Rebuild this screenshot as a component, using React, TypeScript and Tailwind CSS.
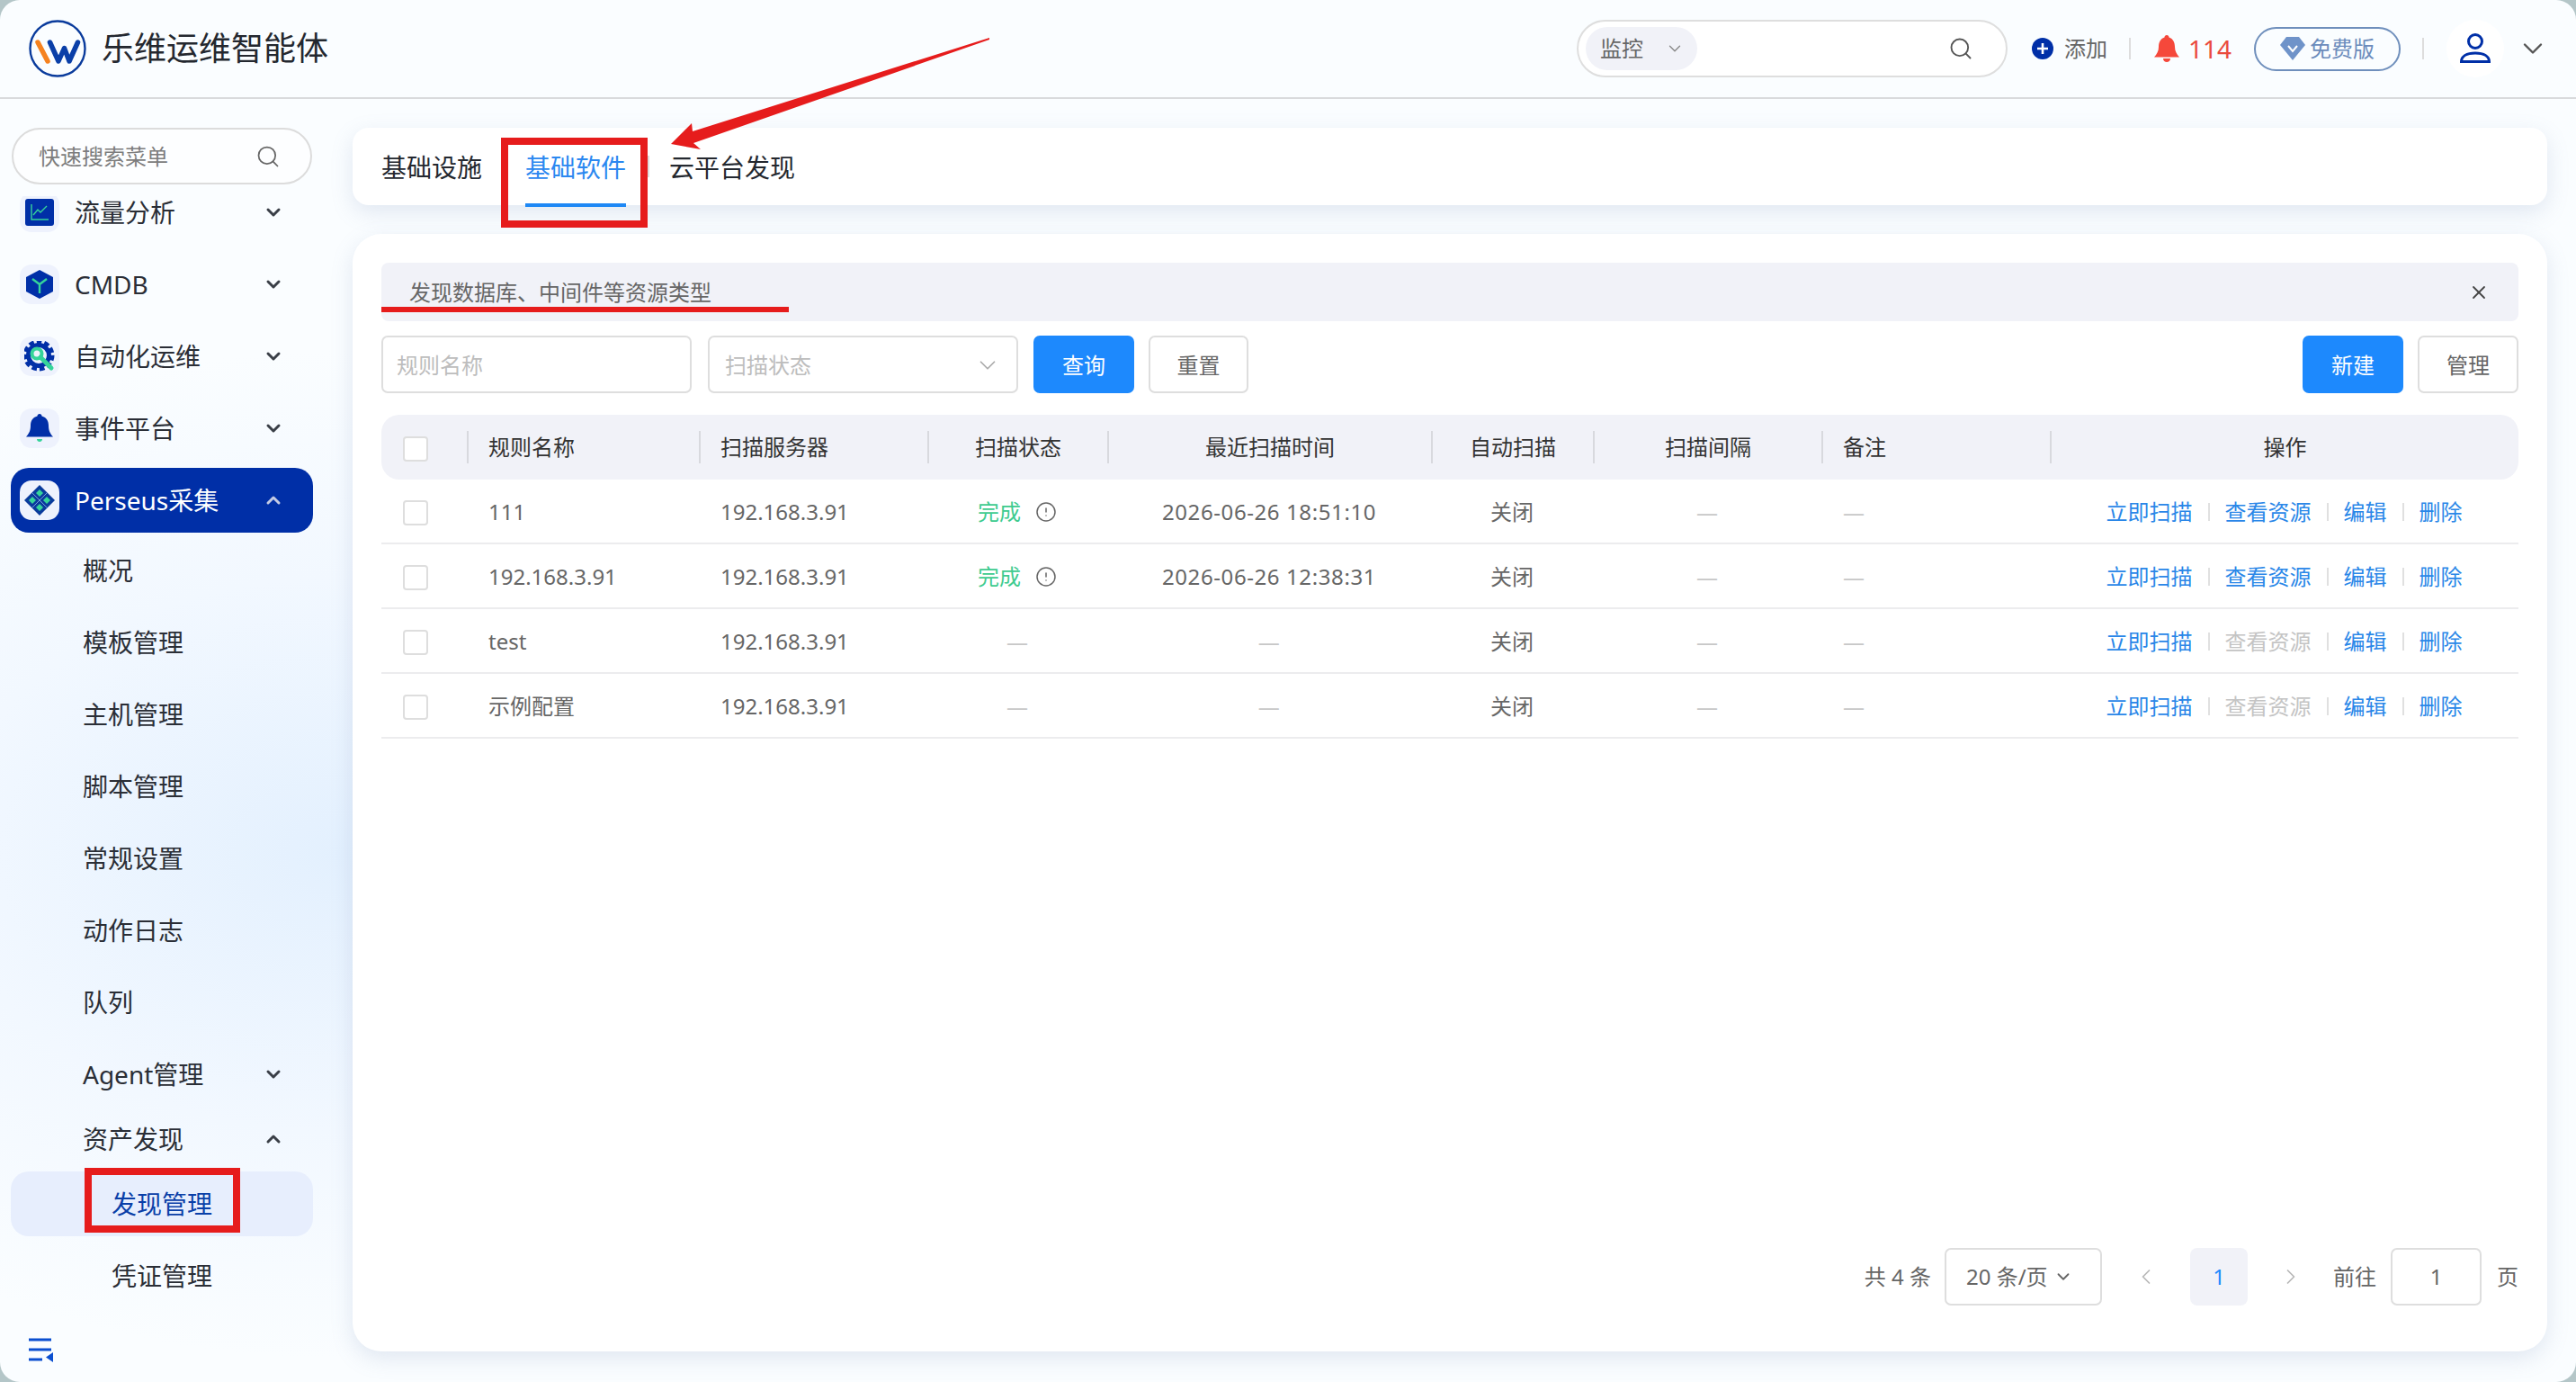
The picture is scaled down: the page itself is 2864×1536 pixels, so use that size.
import { ChevronDown, ChevronLeft, ChevronRight, ChevronUp, Info, Search, X } from 'lucide-react'

const subMenus = ['概况', '模板管理', '主机管理', '脚本管理', '常规设置', '动作日志', '队列']

const rows = [
  { name: '111', status: 'done', time: '2026-06-26 18:51:10', canView: true },
  { name: '192.168.3.91', status: 'done', time: '2026-06-26 12:38:31', canView: true },
  { name: 'test', status: '', time: '', canView: false },
  { name: '示例配置', status: '', time: '', canView: false },
]

const gridCols = 'grid grid-cols-[95px_258px_254px_200px_360px_180px_254px_254px_521px]'

function Logo() {
  return (
    <svg width="64" height="64" viewBox="0 0 64 64" fill="none">
      <circle cx="32" cy="32" r="30.5" stroke="#0a3b9c" strokeWidth="2.4" />
      <path d="M10 25 21 46" stroke="#f58220" strokeWidth="5.5" strokeLinecap="round" />
      <path d="M23.5 25 33 46 39.5 31.5 45 46 54.5 25" stroke="#0a3fa8" strokeWidth="5.5" strokeLinecap="round" strokeLinejoin="round" />
    </svg>
  )
}

function IconTile({ children }: { children: React.ReactNode }) {
  return (
    <div className="flex h-11 w-11 shrink-0 items-center justify-center rounded-[13px] bg-[#eef2fd]">
      {children}
    </div>
  )
}

function ChartIcon() {
  return (
    <svg width="32" height="30" viewBox="0 0 32 30" fill="none">
      <rect width="32" height="30" rx="3" fill="#002fa7" />
      <path d="M7 6v17h19" stroke="#35d49a" strokeWidth="1.4" />
      <path d="M9 18l5-6 3 3 7-7" stroke="#35d49a" strokeWidth="1.4" />
    </svg>
  )
}

function CubeIcon() {
  return (
    <svg width="32" height="32" viewBox="0 0 32 32" fill="none">
      <path d="M16 0 31 8v16l-15 8-15-8V8z" fill="#002fa7" />
      <path d="M8 10l8 6 8-6M16 16v10" stroke="#35d49a" strokeWidth="2.4" />
    </svg>
  )
}

function GearIcon() {
  return (
    <svg width="34" height="34" viewBox="0 0 34 34" fill="none">
      <circle cx="16" cy="16" r="15" stroke="#002fa7" strokeWidth="5" strokeDasharray="5.5 3" />
      <circle cx="16" cy="16" r="11.5" stroke="#002fa7" strokeWidth="5" />
      <circle cx="14" cy="14" r="5.5" stroke="#35d49a" strokeWidth="4" />
      <path d="M18 18 30 30" stroke="#35d49a" strokeWidth="5" strokeLinecap="round" />
    </svg>
  )
}

function BellIcon() {
  return (
    <svg width="30" height="32" viewBox="0 0 30 32" fill="none">
      <path d="M15 0c1.500 0 2.500 1 2.500 2.500C23 4 25 8 25 13c0 6 2 9 5 12.500H0C3 22 5 19 5 13c0-5 2-9 7.500-10.500C12.500 1 13.500 0 15 0z" fill="#002fa7" />
      <path d="M12 28h6c0 2-1.500 3-3 3s-3-1-3-3z" fill="#35d49a" />
    </svg>
  )
}

function PerseusIcon() {
  return (
    <svg width="34" height="34" viewBox="0 0 34 34" fill="none">
      <path d="M17 0 34 17 17 34 0 17z" fill="#0a3b9c" />
      <path d="M8.500 8.500 25.500 25.500M25.500 8.500 8.500 25.500" stroke="#8fb8ee" strokeWidth="0.8" />
      <path d="M17 5 21 9 17 13 13 9zM17 21 21 25 17 29 13 25zM9 13 13 17 9 21 5 17zM25 13 29 17 25 21 21 17z" fill="#35d49a" />
    </svg>
  )
}

function MenuItem({ icon, label }: { icon: React.ReactNode; label: string }) {
  return (
    <div className="flex h-[72px] items-center pl-[10px] pr-8">
      <IconTile>{icon}</IconTile>
      <span className="ml-[17px] flex-1 text-[28px] text-[#2a2e36]">{label}</span>
      <ChevronDown size={24} strokeWidth={3} className="text-[#3a3f47]" />
    </div>
  )
}

function SubItem({ label, arrow }: { label: string; arrow?: 'up' | 'down' }) {
  return (
    <div className="flex h-[72px] items-center pl-[80px] pr-8 text-[28px] text-[#2a2e36]">
      <span className="flex-1">{label}</span>
      {arrow === 'up' && <ChevronUp size={24} strokeWidth={3} className="text-[#3a3f47]" />}
      {arrow === 'down' && <ChevronDown size={24} strokeWidth={3} className="text-[#3a3f47]" />}
    </div>
  )
}

function Sidebar() {
  return (
    <aside className="flex w-[392px] shrink-0 flex-col pt-8">
      <div className="ml-[13px] mr-[45px] flex h-[63px] items-center justify-between rounded-full border-2 border-[#dcdcdc] bg-white/60 pl-7 pr-[33px]">
        <span className="text-[24px] text-[#7d7d7d]">快速搜索菜单</span>
        <Search size={28} strokeWidth={1.5} className="text-[#666]" />
      </div>
      <div className="mt-[13px] h-[1240px] overflow-hidden">
        <div className="-mt-[18px] ml-3 mr-[44px] flex flex-col gap-2">
          <MenuItem icon={<ChartIcon />} label="流量分析" />
          <MenuItem icon={<CubeIcon />} label="CMDB" />
          <MenuItem icon={<GearIcon />} label="自动化运维" />
          <MenuItem icon={<BellIcon />} label="事件平台" />
          <div className="flex h-[72px] items-center rounded-[20px] bg-[#002fa7] pl-[10px] pr-8">
            <div className="flex h-11 w-11 items-center justify-center rounded-[13px] bg-[#eef2fd]">
              <PerseusIcon />
            </div>
            <span className="ml-[17px] flex-1 text-[28px] text-white">Perseus采集</span>
            <ChevronUp size={24} strokeWidth={3} className="text-[#c4cbe4]" />
          </div>
          <div className="-mt-[2px] flex flex-col gap-2">
            {subMenus.map((m) => (
              <SubItem key={m} label={m} />
            ))}
            <SubItem label="Agent管理" arrow="down" />
            <div className="-mt-2">
              <SubItem label="资产发现" arrow="up" />
            </div>
            <div className="-mt-2 flex h-[72px] items-center rounded-[20px] bg-[#e7eefd] pl-[112px] text-[28px] text-[#0a3fa8]">
              发现管理
            </div>
            <div className="flex h-[72px] items-center pl-[112px] text-[28px] text-[#2a2e36]">凭证管理</div>
          </div>
        </div>
      </div>
      <div className="ml-8 mt-[29px]">
        <svg width="28" height="27" viewBox="0 0 28 27" fill="none">
          <path d="M0 2h25M0 13h25M0 24h15" stroke="#0b4fd0" strokeWidth="3" />
          <path d="M27 16v11l-8-5.500z" fill="#0b4fd0" />
        </svg>
      </div>
    </aside>
  )
}

function Header() {
  return (
    <header className="flex h-[110px] shrink-0 items-center border-b-2 border-[#d9dadc] pl-8 pr-[30px]">
      <Logo />
      <span className="ml-[17px] text-[36px] text-[#24282f]">乐维运维智能体</span>
      <div className="ml-auto flex items-center">
        <div className="flex h-16 w-[479px] items-center justify-between rounded-full border-2 border-[#dedede] bg-white pl-2 pr-9">
          <div className="flex h-12 w-[124px] items-center rounded-full bg-[#f1f2f8] pl-4 text-[24px] text-[#666]">
            <span>监控</span>
            <ChevronDown size={22} strokeWidth={1.5} className="ml-[24px] text-[#888]" />
          </div>
          <Search size={28} strokeWidth={1.6} className="text-[#555]" />
        </div>
        <div className="ml-[27px] flex h-6 w-6 items-center justify-center rounded-full bg-[#002fa7]">
          <svg width="14" height="14" viewBox="0 0 14 14" fill="none">
            <path d="M7 1v12M1 7h12" stroke="#fff" strokeWidth="2.600" />
          </svg>
        </div>
        <span className="ml-3 text-[24px] text-[#666]">添加</span>
        <div className="ml-6 h-6 w-[2px] bg-[#dddddd]" />
        <svg width="30" height="30" viewBox="0 0 30 30" fill="#f5483b" className="ml-[25px]">
          <path d="M15 0c1.500 0 2.500 1 2.500 2.500C22 4 24 8 24 13c0 5 2 8 5 11.500H1C4 21 6 18 6 13c0-5 2-9 6.500-10.500C12.500 1 13.500 0 15 0z" />
          <path d="M11 26h8c0 2.500-2 4-4 4s-4-1.500-4-4z" />
        </svg>
        <span className="ml-[9px] text-[28px] leading-none text-[#ea4a3e]">114</span>
        <div className="ml-[25px] flex h-[49px] w-[163px] items-center rounded-full border-2 border-[#6f8fbc] pl-[26px]">
          <svg width="30" height="28" viewBox="0 0 30 28" fill="none">
            <path d="M8 1h14l7 9-14 17L1 10z" fill="#6f93c9" />
            <path d="M10 11l5 6 5-6" stroke="#fff" strokeWidth="2" />
          </svg>
          <span className="ml-[4px] text-[24px] text-[#6c8cbc]">免费版</span>
        </div>
        <div className="ml-6 h-6 w-[2px] bg-[#dddddd]" />
        <div className="ml-[25px] flex h-16 w-16 items-center justify-center rounded-full bg-white">
          <svg width="36" height="34" viewBox="0 0 36 34" fill="none">
            <circle cx="18" cy="9" r="7.500" stroke="#002fa7" strokeWidth="3" />
            <path d="M2.500 31.500c0-6 6-9.500 15.500-9.500s15.500 3.500 15.500 9.500z" stroke="#002fa7" strokeWidth="3" />
          </svg>
        </div>
        <ChevronDown size={36} strokeWidth={1.6} className="ml-[14px] text-[#555]" />
      </div>
    </header>
  )
}

function Tabs() {
  return (
    <div className="flex h-[86px] shrink-0 items-center rounded-[18px] bg-white pl-8 text-[28px] text-[#24282f] shadow-[0_8px_24px_rgba(110,135,175,0.18)]">
      <span className="pt-[2px]">基础设施</span>
      <div className="relative ml-12 flex h-full items-center pt-[2px] text-[#2b88f0]">
        基础软件
        <div className="absolute -bottom-[2px] left-0 right-0 h-1 bg-[#1e88f5]" />
      </div>
      <div className="ml-6 h-6 w-[2px] bg-[#dddddd]" />
      <span className="ml-[22px] pt-[2px]">云平台发现</span>
    </div>
  )
}

function Btn({ label, primary, w }: { label: string; primary?: boolean; w: string }) {
  return (
    <button
      className={
        primary
          ? `h-16 ${w} rounded-[7px] bg-[#1d89fd] pt-[2px] text-[24px] text-white`
          : `h-16 ${w} rounded-[7px] border-2 border-[#dedede] bg-white pt-[2px] text-[24px] text-[#666]`
      }
    >
      {label}
    </button>
  )
}

function TableHead() {
  const heads = [
    { t: '规则名称', left: true },
    { t: '扫描服务器', left: true },
    { t: '扫描状态' },
    { t: '最近扫描时间' },
    { t: '自动扫描' },
    { t: '扫描间隔' },
    { t: '备注', left: true },
    { t: '操作' },
  ]
  return (
    <div className={`${gridCols} h-[72px] items-center rounded-[20px] bg-[#f1f2f8] text-[24px] text-[#333]`}>
      <div className="pl-6 pt-[3px]">
        <div className="h-7 w-7 rounded-[4px] border-2 border-[#dedede] bg-white" />
      </div>
      {heads.map((h) => (
        <div
          key={h.t}
          className={
            h.left
              ? 'flex h-9 items-center border-l-2 border-[#d8d9de] pl-[22px]'
              : 'flex h-9 items-center justify-center border-l-2 border-[#d8d9de]'
          }
        >
          {h.t}
        </div>
      ))}
    </div>
  )
}

function Dash() {
  return <span className="text-[#c8c8c8]">—</span>
}

function Actions({ canView }: { canView: boolean }) {
  return (
    <div className="flex items-center justify-center text-[#2a87e8]">
      <span>立即扫描</span>
      <div className="mx-[17px] h-[20px] w-[2px] bg-[#e0e0e0]" />
      <span className={canView ? '' : 'text-[#c4c4c4]'}>查看资源</span>
      <div className="mx-[17px] h-[20px] w-[2px] bg-[#e0e0e0]" />
      <span>编辑</span>
      <div className="mx-[17px] h-[20px] w-[2px] bg-[#e0e0e0]" />
      <span>删除</span>
    </div>
  )
}

function TableRow({ row }: { row: (typeof rows)[number] }) {
  return (
    <div className={`${gridCols} h-[72px] items-center border-b-2 border-[#ececee] pt-[1px] text-[24px] text-[#666]`}>
      <div className="pl-6 pt-[3px]">
        <div className="h-7 w-7 rounded-[4px] border-2 border-[#dedede] bg-white" />
      </div>
      <div className="pl-6">{row.name}</div>
      <div className="pl-6">192.168.3.91</div>
      <div className="flex items-center justify-center">
        {row.status ? (
          <>
            <span className="text-[#3ecb8f]">完成</span>
            <Info size={24} strokeWidth={1.5} className="ml-[16px] rotate-180 text-[#666]" />
          </>
        ) : (
          <Dash />
        )}
      </div>
      <div className="text-center tracking-[0.6px]">{row.time || <Dash />}</div>
      <div className="text-center">关闭</div>
      <div className="text-center">
        <Dash />
      </div>
      <div className="pl-6">
        <Dash />
      </div>
      <Actions canView={row.canView} />
    </div>
  )
}

function Pagination() {
  return (
    <div className="mt-auto flex items-center justify-end text-[24px] text-[#666]">
      <span>共 4 条</span>
      <div className="ml-[15px] flex h-16 w-[175px] items-center rounded-[7px] border-2 border-[#dedede] pl-[22px]">
        20 条/页
        <ChevronDown size={22} strokeWidth={2} className="ml-[6px]" />
      </div>
      <ChevronLeft size={28} strokeWidth={1.5} className="ml-[35px] text-[#b8b8b8]" />
      <div className="ml-[35px] flex h-16 w-16 items-center justify-center rounded-[8px] bg-[#f1f2f8] text-[#1d89fd]">1</div>
      <ChevronRight size={28} strokeWidth={1.5} className="ml-[34px] text-[#b8b8b8]" />
      <span className="ml-[33px]">前往</span>
      <div className="ml-4 flex h-16 w-[101px] items-center justify-center rounded-[7px] border-2 border-[#dedede]">1</div>
      <span className="ml-[17px]">页</span>
    </div>
  )
}

function Main() {
  return (
    <main className="flex min-w-0 flex-1 flex-col pb-[34px] pr-8 pt-8">
      <Tabs />
      <div className="mt-8 flex flex-1 flex-col rounded-[32px] bg-white px-8 pb-[51px] pt-8 shadow-[0_8px_24px_rgba(110,135,175,0.18)]">
        <div className="flex h-[65px] items-center justify-between rounded-[8px] bg-[#f1f2f8] pl-[31px] pr-8 text-[24px] text-[#666]">
          <span>发现数据库、中间件等资源类型</span>
          <X size={24} strokeWidth={1.8} className="text-[#444]" />
        </div>
        <div className="mt-4 flex items-center">
          <div className="flex h-16 w-[345px] items-center rounded-[7px] border-2 border-[#dedede] pl-[15px] pt-[2px] text-[24px] text-[#bdbdbd]">
            规则名称
          </div>
          <div className="ml-[18px] flex h-16 w-[345px] items-center justify-between rounded-[7px] border-2 border-[#dedede] pl-[17px] pr-[17px] pt-[2px] text-[24px] text-[#bdbdbd]">
            扫描状态
            <ChevronDown size={30} strokeWidth={1.4} className="text-[#aaa]" />
          </div>
          <div className="ml-[17px]">
            <Btn label="查询" primary w="w-[112px]" />
          </div>
          <div className="ml-4">
            <Btn label="重置" w="w-[111px]" />
          </div>
          <div className="ml-auto">
            <Btn label="新建" primary w="w-[112px]" />
          </div>
          <div className="ml-4">
            <Btn label="管理" w="w-[112px]" />
          </div>
        </div>
        <div className="mt-6">
          <TableHead />
          {rows.map((r) => (
            <TableRow key={r.name} row={r} />
          ))}
        </div>
        <Pagination />
      </div>
    </main>
  )
}

// red marks someone drew over the screenshot
function Annotations() {
  return (
    <div className="pointer-events-none absolute inset-0">
      <div className="absolute left-[557px] top-[153px] h-[100px] w-[163px] border-8 border-[#e61c1c]" />
      <div className="absolute left-[94px] top-[1298px] h-[72px] w-[173px] border-8 border-[#e61c1c]" />
      <div className="absolute left-[424px] top-[341px] h-[6px] w-[453px] bg-[#e61c1c]" />
      <svg width="2864" height="1536" className="absolute left-0 top-0">
        <polygon points="1100,42 770,146 769,137 746,160 779,166 771,159 1100,44" fill="#e61c1c" />
      </svg>
    </div>
  )
}

export default function App() {
  return (
    <div className="relative h-[1536px] w-[2864px] overflow-hidden bg-[#b4c6c8] font-['Noto_Sans','Noto_Sans_CJK_SC',sans-serif]">
      <div className="flex h-full flex-col rounded-[22px] bg-[radial-gradient(ellipse_800px_560px_at_380px_950px,#e3f0fe_0%,#f2f8ff_55%,#fafdff_100%)]">
        <Header />
        <div className="flex min-h-0 flex-1">
          <Sidebar />
          <Main />
        </div>
      </div>
      <Annotations />
    </div>
  )
}
